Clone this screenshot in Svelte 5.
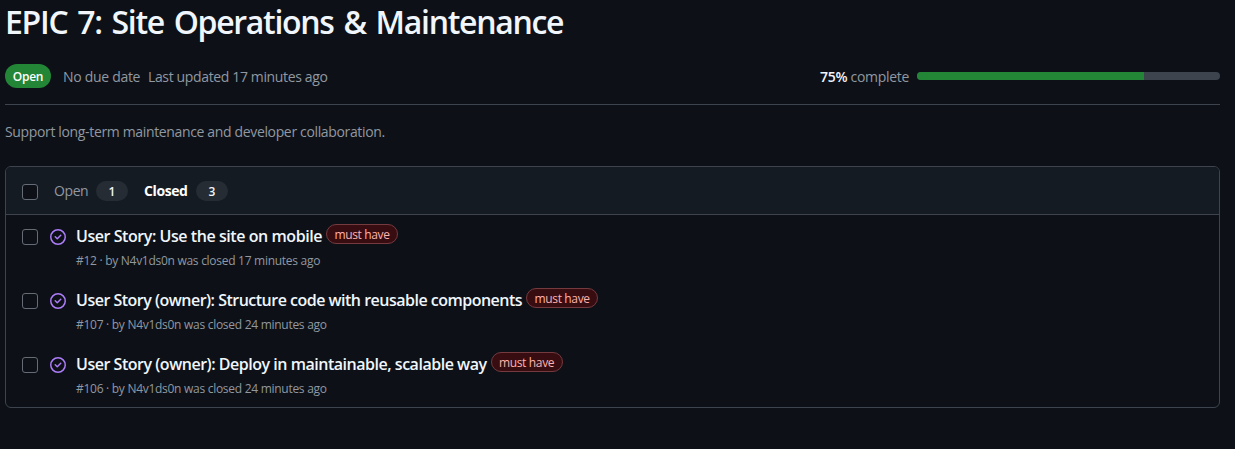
<script>
  const issues = [
    { number: 12, title: 'User Story: Use the site on mobile', ago: '17 minutes ago', kern: -0.44 },
    { number: 107, title: 'User Story (owner): Structure code with reusable components', ago: '24 minutes ago', kern: -0.505 },
    { number: 106, title: 'User Story (owner): Deploy in maintainable, scalable way', ago: '24 minutes ago', kern: -0.475 }
  ];
  const progress = 75;
</script>

<main>
  <h1>EPIC 7: Site Operations &amp; Maintenance</h1>

  <div class="meta">
    <span class="state">Open</span>
    <span class="due">No due date</span>
    <span class="updated">Last updated 17 minutes ago</span>
    <div class="progress">
      <span class="percent"><strong>{progress}%</strong> <span class="complete">complete</span></span>
      <div class="track"><div class="fill" style="width: {progress}%"></div></div>
    </div>
  </div>

  <p class="description">Support long-term maintenance and developer collaboration.</p>

  <section class="box">
    <header>
      <span class="check"></span>
      <span class="tab open">Open</span><span class="count">1</span>
      <span class="tab closed">Closed</span><span class="count">3</span>
    </header>
    {#each issues as issue}
      <article>
        <span class="check"></span>
        <svg class="icon" width="16" height="16" viewBox="0 0 16 16" fill="#ab7df8">
          <path d="M11.28 6.78a.75.75 0 0 0-1.06-1.06L7.25 8.69 5.78 7.22a.75.75 0 0 0-1.06 1.06l2 2a.75.75 0 0 0 1.06 0l3.5-3.5Z" />
          <path d="M16 8A8 8 0 1 1 0 8a8 8 0 0 1 16 0Zm-1.5 0a6.5 6.5 0 1 0-13 0 6.5 6.5 0 0 0 13 0Z" />
        </svg>
        <div class="content">
          <div class="line">
            <span class="title" style="letter-spacing: {issue.kern}px">{issue.title}</span>
            <span class="label">must have</span>
          </div>
          <div class="sub">#{issue.number} · by N4v1ds0n was closed {issue.ago}</div>
        </div>
      </article>
    {/each}
  </section>
</main>

<style>
  :global(body) { background: #0d1117; }
  main {
    box-sizing: border-box;
    height: 449px;
    padding: 0 15px 0 5px;
    overflow: hidden;
    background: #0d1117;
    color: #f0f6fc;
    font-family: "Segoe UI", "Open Sans", "Noto Sans", sans-serif;
    font-size: 14px;
    white-space: nowrap;
  }
  h1 {
    margin: 0;
    height: 64px;
    font-size: 32px;
    font-weight: 600;
    line-height: 44px;
    letter-spacing: -1.3px;
    word-spacing: 2.8px;
  }
  .meta {
    display: flex;
    align-items: center;
    height: 24px;
    padding-bottom: 16px;
    border-bottom: 1px solid #3d444d;
    color: #9198a1;
  }
  .state {
    box-sizing: border-box;
    width: 46px;
    height: 24px;
    border-radius: 12px;
    background: #238636;
    color: #fff;
    font-size: 12px;
    font-weight: 600;
    line-height: 25px;
    text-align: center;
    letter-spacing: -0.3px;
  }
  .due { width: 85px; margin-left: 12px; letter-spacing: -0.3px; }
  .updated { letter-spacing: -0.36px; }
  .due, .updated, .percent { position: relative; top: 1px; line-height: 24px; }
  .progress { display: flex; align-items: center; width: 400px; margin-left: auto; }
  .percent { width: 97px; letter-spacing: -0.3px; }
  strong { color: #f0f6fc; font-weight: 600; }
  .track { width: 303px; height: 8px; margin-top: -1px; border-radius: 4px; overflow: hidden; background: #3d444d; }
  .fill { height: 100%; background: #238636; }
  .description { margin: 16px 0 23px; line-height: 22px; color: #9198a1; letter-spacing: -0.35px; }
  .box { box-sizing: border-box; height: 242px; border: 1px solid #3d444d; border-radius: 6px; overflow: hidden; }
  header {
    box-sizing: border-box;
    display: flex;
    align-items: center;
    height: 48px;
    padding: 1px 0 0 16px;
    background: #151b23;
    border-bottom: 1px solid #3d444d;
  }
  .check {
    box-sizing: border-box;
    flex: none;
    width: 16px;
    height: 16px;
    border: 1px solid #656c76;
    border-radius: 3px;
    background: #0d1117;
  }
  header .check { margin-top: 1px; }
  .tab { line-height: 18px; }
  .open { width: 42px; margin-left: 16px; color: #9198a1; letter-spacing: -0.4px; }
  .closed { width: 52px; margin-left: 16px; color: #fff; font-weight: 700; letter-spacing: -0.4px; }
  .count {
    width: 32px;
    height: 20px;
    border-radius: 10px;
    background: #262c34;
    font-size: 12px;
    font-weight: 600;
    line-height: 22px;
    text-align: center;
  }
  article { display: flex; height: 64px; padding-left: 16px; }
  article .check { margin-top: 14px; }
  .icon { flex: none; margin: 14px 0 0 12px; }
  .content { margin-left: 10px; }
  .line { display: flex; height: 36px; }
  .title { font-size: 16px; font-weight: 600; line-height: 43px; }
  .label {
    box-sizing: border-box;
    width: 72px;
    height: 20px;
    margin: 9px 0 0 4px;
    border: 1px solid #743a3e;
    border-radius: 10px;
    background: #380d11;
    color: #ffb3ad;
    font-size: 12px;
    line-height: 20px;
    text-align: center;
    letter-spacing: -0.35px;
  }
  .sub { font-size: 12px; line-height: 20px; color: #9198a1; letter-spacing: -0.28px; }
</style>
